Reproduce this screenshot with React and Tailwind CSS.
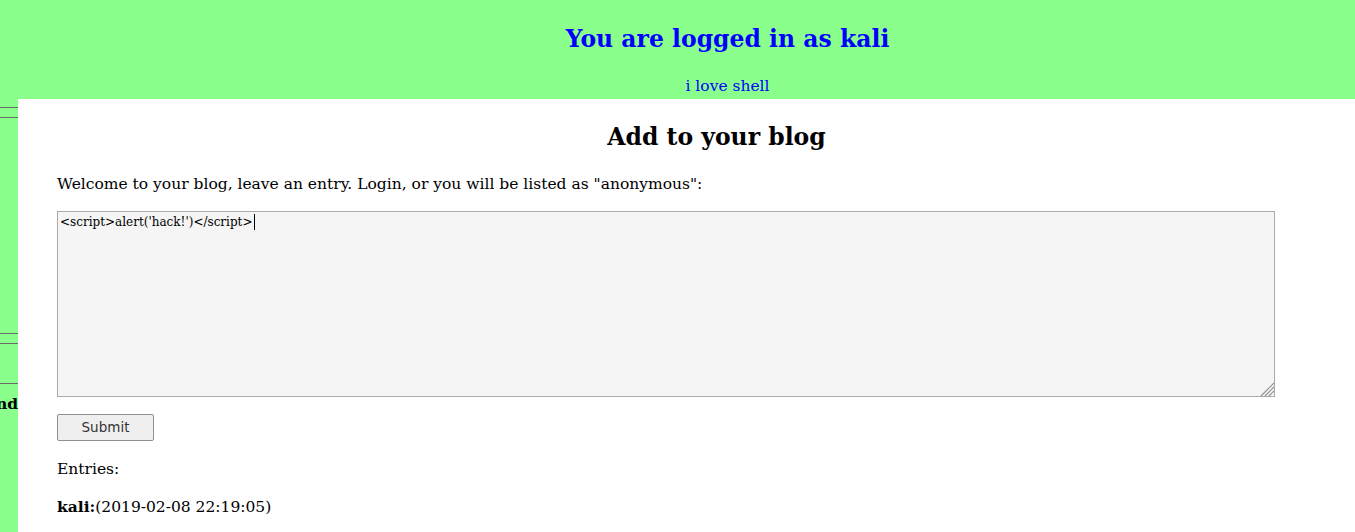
import React from "react";

const serif = "font-['DejaVu_Serif',serif]";

function SideBar() {
  return (
    <div className="w-[18px] shrink-0 overflow-hidden">
      <div className="mt-[8px] border-t border-[#6b6b6b]" />
      <div className="mt-[9px] border-t border-[#6b6b6b]" />
      <div className="mt-[215px] border-t border-[#6b6b6b]" />
      <div className="mt-[9px] border-t border-[#6b6b6b]" />
      <div className="mt-[39px] border-t border-[#6b6b6b]" />
      <div className="mt-[10px] flex justify-end whitespace-nowrap text-[15.5px] font-bold leading-[20px] text-black">
        nd
      </div>
    </div>
  );
}

function BlogTextArea() {
  return (
    <div className="relative h-[186px] w-[1218px] border border-[#a9a9a9] bg-[#f5f5f5] px-[2px] py-[1px]">
      <div className="flex items-center text-[12px] leading-[18px] text-black">
        <span>&lt;script&gt;alert('hack!')&lt;/script&gt;</span>
        <span className="ml-[1px] inline-block h-[16px] w-[1px] bg-black" />
      </div>
      {/* resize grip */}
      <svg
        className="absolute bottom-0 right-0"
        width="14"
        height="14"
        viewBox="0 0 14 14"
      >
        <line x1="14" y1="1" x2="1" y2="14" stroke="#909090" strokeWidth="1.2" />
        <line x1="14" y1="5" x2="5" y2="14" stroke="#909090" strokeWidth="1.2" />
        <line x1="14" y1="9" x2="9" y2="14" stroke="#909090" strokeWidth="1.2" />
      </svg>
    </div>
  );
}

export default function App() {
  return (
    <div className={`h-[532px] w-full overflow-hidden bg-[#8bff8b] ${serif}`}>
      {/* header */}
      <div className="h-[99px] pl-[100px] text-center">
        <h1 className="pt-[25px] text-[23.5px] font-bold leading-[28px] text-[#0000ff]">
          You are logged in as kali
        </h1>
        <p className="mt-[23px] text-[15.5px] leading-[20px] text-[#0000ff]">
          i love shell
        </p>
      </div>

      <div className="flex">
        <SideBar />

        {/* main panel */}
        <div className="h-[433px] flex-1 bg-white">
          <h2 className="pl-[60px] pt-[23px] text-center text-[23.5px] font-bold leading-[30px] text-black">
            Add to your blog
          </h2>
          <div className="pl-[39px]">
            <p className="mt-[22px] text-[15.5px] leading-[20px] text-black">
              Welcome to your blog, leave an entry. Login, or you will be listed
              as "anonymous":
            </p>
            <div className="mt-[17px]">
              <BlogTextArea />
            </div>
            <button className="mt-[17px] h-[27px] w-[97px] rounded-[2px] border border-[#8f8f8f] bg-[#efefef] font-['DejaVu_Sans',sans-serif] text-[13.5px] text-[#333]">
              Submit
            </button>
            <p className="mt-[18px] text-[15.5px] leading-[20px] text-black">
              Entries:
            </p>
            <p className="mt-[18px] text-[15.5px] leading-[20px] text-black">
              <b>kali:</b>(2019-02-08 22:19:05)
            </p>
          </div>
        </div>
      </div>
    </div>
  );
}
